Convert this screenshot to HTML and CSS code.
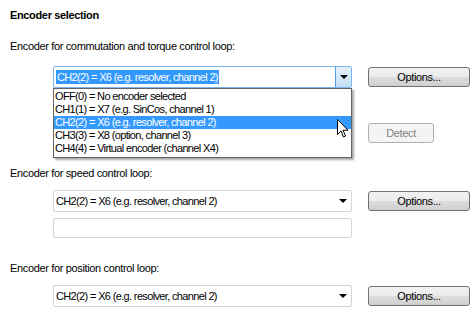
FILE: index.html
```html
<!DOCTYPE html>
<html lang="en">
<head>
  <meta charset="UTF-8" />
  <title>Encoder selection</title>
  <link rel="stylesheet" href="styles.css">
</head>
<body>
  <div class="panel">
    <div class="title">Encoder selection</div>

    <div class="label label-first">Encoder for commutation and torque control loop:</div>
    <div class="row row-first">
      <div class="combo focused">
        <span class="value selected">CH2(2) = X6 (e.g. resolver, channel 2)</span>
        <span class="arrow-btn"><span class="tri"></span></span>
        <ul class="dropdown">
          <li>OFF(0) = No encoder selected</li>
          <li>CH1(1) = X7 (e.g. SinCos, channel 1)</li>
          <li class="hl">CH2(2) = X6 (e.g. resolver, channel 2)</li>
          <li>CH3(3) = X8 (option, channel 3)</li>
          <li>CH4(4) = Virtual encoder (channel X4)</li>
        </ul>
        <svg class="cursor" width="12" height="19" viewBox="0 0 12 19">
          <path d="M0.5 0.5 L0.5 15.5 L4 12 L6.5 18 L8.5 17 L6 11.2 L11 11.2 Z" fill="#fff" stroke="#000" stroke-width="1"/>
        </svg>
      </div>
      <button class="btn">Options...</button>
    </div>
    <div class="row row-detect">
      <div class="spacer"></div>
      <button class="btn btn-detect" disabled>Detect</button>
    </div>

    <div class="label label-speed">Encoder for speed control loop:</div>
    <div class="row row-combo">
      <div class="combo">
        <span class="value">CH2(2) = X6 (e.g. resolver, channel 2)</span>
        <span class="tri"></span>
      </div>
      <button class="btn">Options...</button>
    </div>
    <div class="row row-text">
      <div class="textbox"></div>
    </div>

    <div class="label label-pos">Encoder for position control loop:</div>
    <div class="row row-combo">
      <div class="combo">
        <span class="value">CH2(2) = X6 (e.g. resolver, channel 2)</span>
        <span class="tri"></span>
      </div>
      <button class="btn">Options...</button>
    </div>
  </div>
</body>
</html>
```

FILE: styles.css
```css
body { margin: 0; background: #fff; color: #000; font-family: 'Liberation Sans', Arial, sans-serif; font-size: 11px; letter-spacing: -0.35px; }
.panel { padding: 0 0 0 10px; }
.title { margin-top: 8px; height: 14px; line-height: 14px; font-weight: bold; }
.label { height: 14px; line-height: 14px; }
.label-first { margin-top: 17px; }
.label-speed { margin-top: 23px; }
.label-pos { margin-top: 23px; }

.row { display: flex; align-items: center; padding-left: 43px; }
.row > * { flex-shrink: 0; }
.row-first { margin-top: 13px; }
.row-detect { margin-top: 35px; }
.row-combo { margin-top: 10px; }
.row-text { margin-top: 6px; }

.combo {
  position: relative; box-sizing: border-box; width: 299px; height: 22px;
  border: 1px solid #d5d5d5; border-radius: 2px; background: #fff;
  display: flex; align-items: center; padding-left: 2px;
}
.combo .value, .dropdown li { letter-spacing: -0.65px; }
.combo .value { flex: 1; white-space: nowrap; }
.combo .tri {
  width: 0; height: 0; margin-right: 4px;
  border-left: 4px solid transparent; border-right: 4px solid transparent; border-top: 4px solid #000;
}
.combo.focused { border-color: #7eb4ea; }
.value.selected { flex: none; background: #3399ff; color: #fff; padding: 1px 1px; margin-right: auto; }
.arrow-btn {
  box-sizing: border-box; width: 16px; height: 20px; display: flex; align-items: center; justify-content: center;
  background: linear-gradient(#e5f1fb, #c4dff6); border-left: 1px solid #569de5;
}
.arrow-btn .tri { margin: 0; }

.dropdown {
  position: absolute; top: 21px; left: -1px; width: 299px; box-sizing: border-box;
  margin: 0; padding: 1px 0 2px; list-style: none; background: #fff;
  border: 1px solid #646464; box-shadow: 2px 2px 2px rgba(0, 0, 0, 0.35); z-index: 2;
}
.dropdown li { height: 13px; line-height: 13px; padding-left: 1px; white-space: nowrap; }
.dropdown li.hl { background: #3399ff; color: #fff; }
.cursor { position: absolute; left: 283px; top: 52px; z-index: 3; }

.btn {
  box-sizing: border-box; margin-left: 16px; width: 102px; height: 20px; padding: 0;
  font: inherit; letter-spacing: inherit; color: #000;
  border: 1px solid #707070; border-radius: 3px;
  background: linear-gradient(#f2f2f2 0%, #ebebeb 50%, #dddddd 51%, #cfcfcf 100%);
}
.spacer { width: 299px; }
.btn-detect { width: 66px; color: #838383; border-color: #adb2b5; background: #f4f4f4; }
.textbox { box-sizing: border-box; width: 299px; height: 20px; border: 1px solid #d5d5d5; border-radius: 2px; }
```
